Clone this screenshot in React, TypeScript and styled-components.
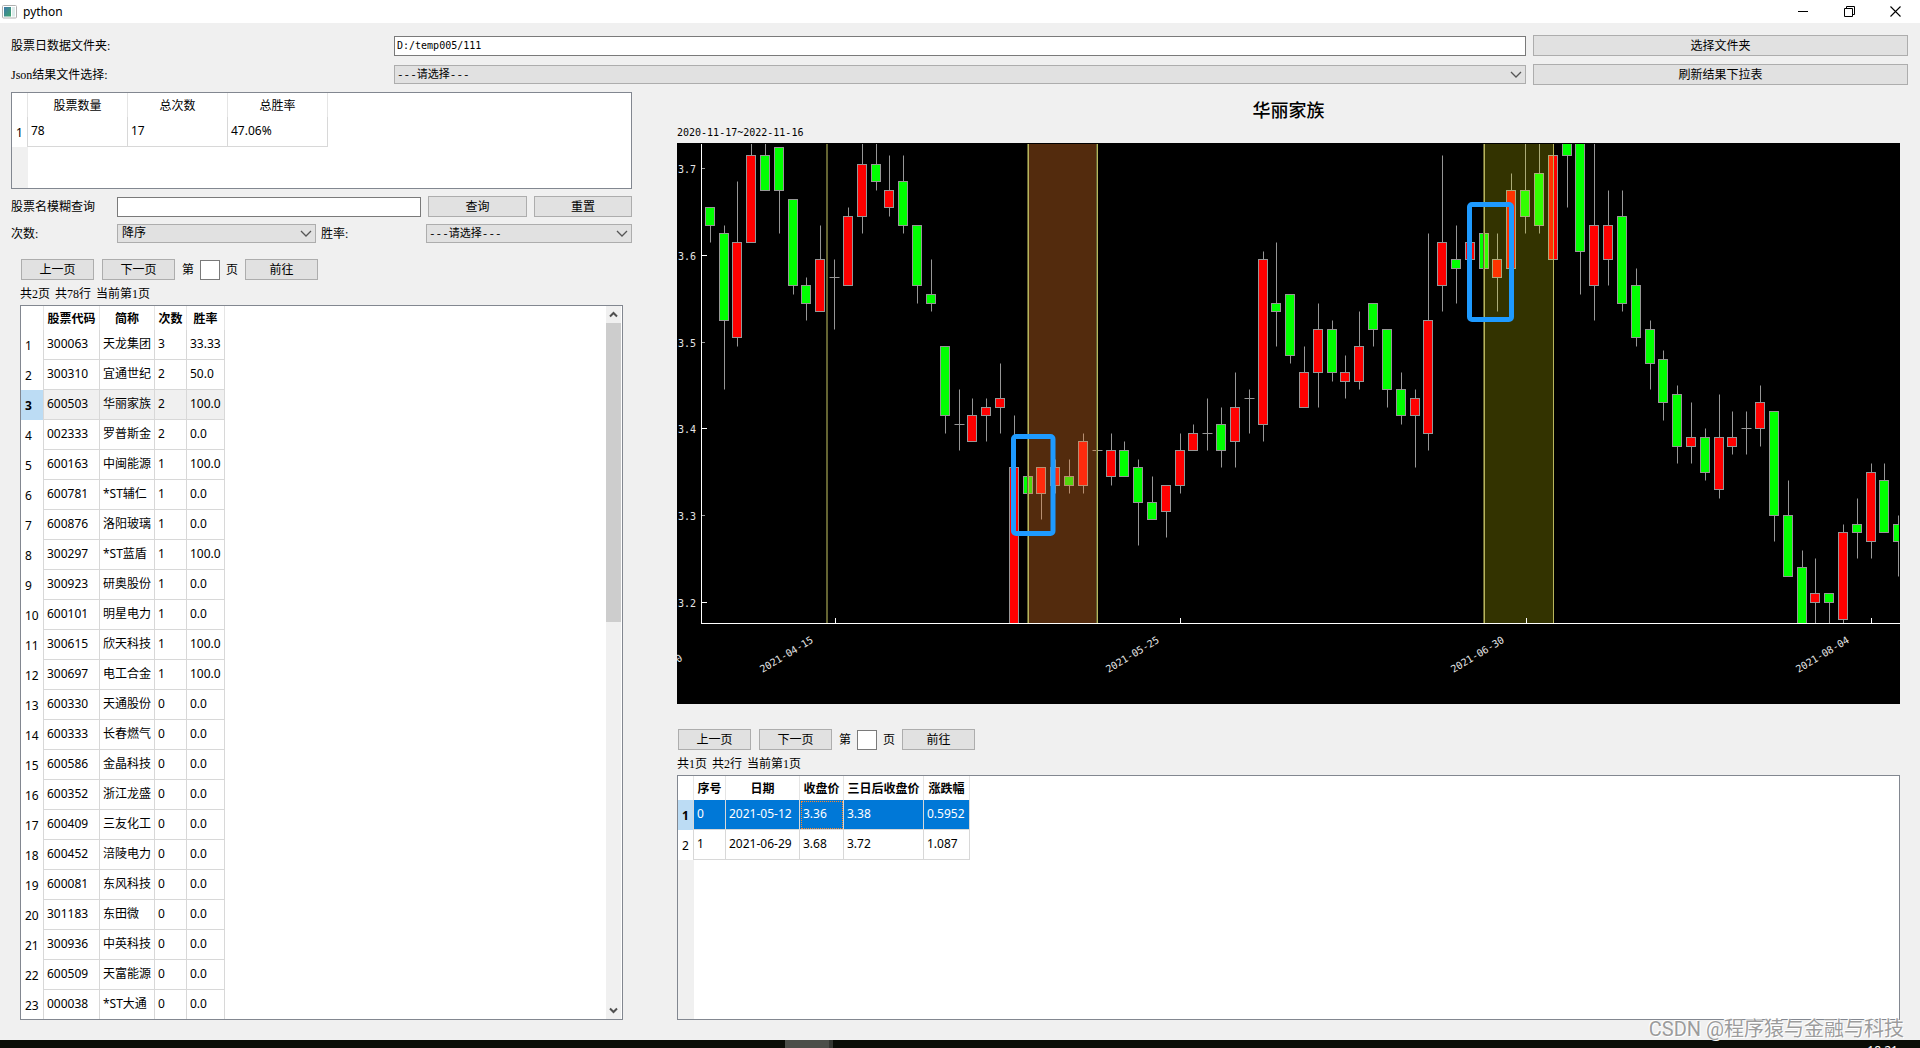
import React from 'react';
import styled, { createGlobalStyle, css } from 'styled-components';

const UI = `"Noto Sans", "Noto Sans CJK SC", sans-serif`;
const SONG = `"Liberation Serif", "Noto Sans CJK SC", sans-serif`;
const MONO = `"DejaVu Sans Mono", "Noto Sans CJK SC", monospace`;

const GlobalStyle = createGlobalStyle`
  *, *::before, *::after { box-sizing: border-box; }
  body { margin: 0; background: #f0f0f0; color: #000; font: 12px/16px ${SONG}; overflow: hidden; }
  button, input, select { font: inherit; color: inherit; margin: 0; }
`;

const Window = styled.div`
  height: 100vh;
  display: flex;
  flex-direction: column;
`;

const TitleBar = styled.header`
  height: 23px;
  flex: none;
  display: flex;
  align-items: center;
  background: #fff;
  padding: 0 2px;
  font-family: ${UI};
`;

const AppTitle = styled.h1`
  flex: 1;
  margin: 0 0 0 5px;
  font-size: 12px;
  line-height: 16px;
  font-weight: 400;
`;

const CaptionButton = styled.button`
  width: 46px;
  height: 20px;
  border: 0;
  padding: 0;
  background: none;
  display: grid;
  place-items: center;
`;

const Content = styled.main`
  flex: 1;
  min-height: 0;
  display: flex;
  flex-direction: column;
  gap: 7px;
  padding: 12px 12px 20px 11px;
`;

const FileForm = styled.form`
  display: grid;
  grid-template-columns: 376fr 1132fr 375fr;
  gap: 8px 7px;
  align-items: center;
`;

const Button = styled.button`
  height: 21px;
  width: ${(p: { $width?: string }) => p.$width ?? '100%'};
  padding: 2px 0 0;
  border: 1px solid #adadad;
  background: #e1e1e1;
  line-height: 17px;
`;

const TextInput = styled.input`
  height: 20px;
  width: ${(p: { $width?: string }) => p.$width ?? '100%'};
  padding: 0 2px;
  border: 1px solid #7a7a7a;
  background: #fff;
  font-family: ${MONO};
  font-size: 10px;
`;

const SelectBox = styled.span`
  position: relative;
  display: block;
  width: 100%;
  svg { position: absolute; right: 4px; top: 6px; pointer-events: none; }
`;

const Select = styled.select`
  display: block;
  appearance: none;
  width: 100%;
  height: 19px;
  padding: 0 20px 0 ${(p: { $small?: boolean }) => (p.$small ? '2px' : '4px')};
  border: 1px solid #adadad;
  border-radius: 0;
  background: #e1e1e1;
  font-family: "Liberation Mono", "Noto Sans CJK SC", monospace;
  font-size: ${(p: { $small?: boolean }) => (p.$small ? '11px' : '12px')};
  line-height: 16px;
`;

const Columns = styled.div`
  flex: 1;
  min-height: 0;
  display: grid;
  grid-template-columns: 621fr 1223fr;
  grid-template-rows: minmax(0, 1fr);
  column-gap: 45px;
  padding-right: 8px;
`;

const Column = styled.section`
  display: flex;
  flex-direction: column;
  min-width: 0;
  min-height: 0;
`;

const QueryForm = styled.form`
  display: flex;
  flex-direction: column;
  gap: 7px;
  margin-top: 7px;
`;

const QueryRow = styled.div`
  display: grid;
  grid-template-columns: 99px 304fr 99fr 98fr;
  column-gap: 7px;
  align-items: center;
`;

const SortRow = styled.div`
  display: grid;
  grid-template-columns: 101px 199fr 100px 206fr;
  column-gap: 5px;
  align-items: center;
`;

const ListBlock = styled.div`
  flex: 1;
  min-height: 0;
  display: flex;
  flex-direction: column;
  padding: ${(p: { $inset?: boolean }) => (p.$inset ? '0 9px' : '0')};
  margin-top: ${(p: { $inset?: boolean }) => (p.$inset ? '16px' : '25px')};
`;

const Pager = styled.div`
  display: flex;
  align-items: center;
  gap: 8px;
  padding-left: 1px;
`;

const PageJump = styled.label`
  display: flex;
  align-items: center;
  gap: 6px;
  margin: 0 -1px;
`;

const PageInfo = styled.p`
  display: flex;
  gap: 5px;
  margin: 6px 0 3px;
  line-height: 16px;
`;

const Panel = styled.div<{ $stub: string; $grow?: boolean }>`
  display: flex;
  overflow: hidden;
  min-height: 0;
  border: 1px solid #828790;
  background: linear-gradient(to right, #f0f0f0 ${p => p.$stub}, #fff ${p => p.$stub});
  ${p => (p.$grow ? css`flex: 1;` : css`flex: 0 0 97px;`)}
`;

const PanelBody = styled.div`
  flex: 1;
  min-width: 0;
  overflow: hidden;
`;

const HeaderStrip = styled.div`
  height: 24px;
  margin-bottom: -24px;
  background: #fff;
`;

const Table = styled.table`
  position: relative;
  table-layout: fixed;
  width: 0;
  border-spacing: 0;
  font-family: ${UI};
  font-size: 12px;
  line-height: 16px;
  white-space: nowrap;
`;

const Col = styled.col<{ $w: number }>`
  width: ${p => p.$w}px;
`;

const HeadCell = styled.th<{ $bold?: boolean }>`
  height: 24px;
  padding: 2px 0 0;
  border-right: 1px solid #e5e5e5;
  background: #fff;
  font-weight: ${p => (p.$bold ? 700 : 400)};
`;

type RowState = 'none' | 'hover' | 'selected';

const RowHead = styled.th<{ $state: RowState }>`
  height: 30px;
  padding: 2px 0 0 4px;
  border-right: 1px solid #d8d8d8;
  text-align: left;
  background: ${p => (p.$state === 'none' ? '#fff' : '#bcdcf4')};
  font-weight: ${p => (p.$state === 'none' ? 400 : 700)};
`;

const Cell = styled.td<{ $state: RowState; $focus?: boolean }>`
  height: 30px;
  padding: 0 0 2px 3px;
  border-right: 1px solid #d8d8d8;
  border-bottom: 1px solid #d8d8d8;
  background: ${p => ({ none: '#fff', hover: '#f0f0f0', selected: '#0078d7' })[p.$state]};
  color: ${p => (p.$state === 'selected' ? '#fff' : '#000')};
  ${p => p.$focus && css`outline: 1px dotted #ff8728; outline-offset: -2px;`}
`;

const ScrollBar = styled.div`
  width: 15px;
  margin-right: 1px;
  display: flex;
  flex-direction: column;
  background: #f0f0f0;
`;

const ScrollButton = styled.button`
  height: 17px;
  border: 0;
  padding: 0;
  background: none;
  display: grid;
  place-items: center;
`;

const ScrollTrack = styled.div`
  flex: 1;
`;

const ScrollThumb = styled.div`
  height: 44%;
  background: #cdcdcd;
`;

const ChartTitle = styled.h2`
  margin: 5px 0 4px;
  text-align: center;
  font: 500 18px/24px "Noto Sans CJK SC", sans-serif;
`;

const ChartRange = styled.p`
  margin: 0 0 2px;
  font: 10px/16px ${MONO};
`;

const Chart = styled.svg`
  display: block;
  flex: none;
  width: 100%;
  background: #000;
  text { fill: #e4e4e4; font: 10px ${MONO}; }
`;

const Taskbar = styled.footer`
  position: relative;
  flex: none;
  height: 8px;
  display: flex;
  justify-content: flex-end;
  overflow: hidden;
  background: #0a0d07;
  padding: 3px 22px 0 0;
  color: #fff;
  font: 12px/16px ${UI};
`;

const ActiveTask = styled.span`
  position: absolute;
  left: 785px;
  top: 0;
  width: 48px;
  height: 8px;
  background: #4b4e49;
  border-right: 4px solid #343732;
`;

const Watermark = styled.div`
  position: absolute;
  right: 16px;
  bottom: 4px;
  font: 20px/30px Roboto, "Noto Sans CJK SC", sans-serif;
  color: #9c9c9c;
  text-shadow: 1px 1px 0 #fff, -1px -1px 0 #fff;
`;

const Chevron = () => (
  <svg width="12" height="8" viewBox="0 0 12 8">
    <path d="M1 1 L6 6 L11 1" fill="none" stroke="#555" strokeWidth="1.3" />
  </svg>
);

const ScrollArrow = ({ down }: { down?: boolean }) => (
  <svg width="9" height="7" viewBox="0 0 9 7">
    <path d={down ? 'M1 1.5 L4.5 5 L8 1.5' : 'M1 5.5 L4.5 2 L8 5.5'} fill="none" stroke="#505050" strokeWidth="2" />
  </svg>
);

interface GridProps {
  label: string;
  stub: number;
  widths: number[];
  heads: string[];
  rows: string[][];
  bold?: boolean;
  active?: number;
  activeState?: RowState;
  focusCol?: number;
}

const DataGrid = ({ label, stub, widths, heads, rows, bold, active = -1, activeState = 'none', focusCol = -1 }: GridProps) => (
  <PanelBody>
    <HeaderStrip />
    <Table aria-label={label}>
      <colgroup>
        <Col $w={stub} />
        {widths.map((w, i) => <Col key={i} $w={w} />)}
      </colgroup>
      <thead>
        <tr>
          <HeadCell as="td" />
          {heads.map(h => <HeadCell key={h} scope="col" $bold={bold}>{h}</HeadCell>)}
        </tr>
      </thead>
      <tbody>
        {rows.map((row, r) => {
          const state: RowState = r === active ? activeState : 'none';
          return (
            <tr key={r}>
              <RowHead scope="row" $state={state}>{r + 1}</RowHead>
              {row.map((v, c) => (
                <Cell key={c} $state={state} $focus={state === 'selected' && c === focusCol}>{v}</Cell>
              ))}
            </tr>
          );
        })}
      </tbody>
    </Table>
  </PanelBody>
);

const stocks = `300063 天龙集团 3 33.33
300310 宜通世纪 2 50.0
600503 华丽家族 2 100.0
002333 罗普斯金 2 0.0
600163 中闽能源 1 100.0
600781 *ST辅仁 1 0.0
600876 洛阳玻璃 1 0.0
300297 *ST蓝盾 1 100.0
300923 研奥股份 1 0.0
600101 明星电力 1 0.0
300615 欣天科技 1 100.0
300697 电工合金 1 100.0
600330 天通股份 0 0.0
600333 长春燃气 0 0.0
600586 金晶科技 0 0.0
600352 浙江龙盛 0 0.0
600409 三友化工 0 0.0
600452 涪陵电力 0 0.0
600081 东风科技 0 0.0
301183 东田微 0 0.0
300936 中英科技 0 0.0
600509 天富能源 0 0.0
000038 *ST大通 0 0.0`.split('\n').map(l => l.split(' '));

// One candle per entry: kind, then high, body top, body bottom, low in 0.01 steps below 3.695.
const candles: [string, number, number, number, number][] = [
  ['g', 4, 4, 6, 8], ['g', 6, 7, 17, 25], ['r', 1, 8, 19, 20], ['r', -9, -2, 8, 8], ['g', -9, -2, 2, 2],
  ['g', -3, -3, 2, 7], ['g', 3, 3, 13, 14], ['g', 12, 13, 15, 17], ['r', 6, 10, 16, 16], ['d', 10, 12, 12, 18],
  ['r', 4, 5, 13, 13], ['r', -9, -1, 5, 7], ['g', -9, -1, 1, 2], ['r', -2, 2, 4, 5], ['g', -2, 1, 6, 7],
  ['g', 6, 6, 13, 15], ['g', 10, 14, 15, 16], ['g', 20, 20, 28, 30], ['d', 25, 29, 29, 32], ['r', 26, 28, 31, 31],
  ['r', 26, 27, 28, 31], ['r', 22, 26, 27, 30], ['r', 28, 34, 60, 60], ['g', 34, 35, 37, 37], ['r', 34, 34, 37, 40],
  ['r', 33, 34, 36, 37], ['g', 33, 35, 36, 37], ['r', 30, 31, 36, 37], ['d', 32, 32, 32, 32], ['r', 30, 32, 35, 36],
  ['g', 31, 32, 35, 35], ['g', 33, 34, 38, 43], ['g', 35, 38, 40, 40], ['r', 36, 36, 39, 42], ['r', 30, 32, 36, 37],
  ['r', 29, 30, 32, 32], ['d', 26, 30, 30, 32], ['g', 27, 29, 32, 34], ['r', 23, 27, 31, 34], ['d', 25, 26, 26, 30],
  ['r', 9, 10, 29, 31], ['g', 8, 15, 16, 20], ['g', 14, 14, 21, 22], ['r', 20, 23, 27, 27], ['r', 15, 18, 23, 27],
  ['g', 17, 18, 23, 24], ['r', 21, 23, 24, 26], ['r', 16, 20, 24, 25], ['g', 15, 15, 18, 20], ['g', 18, 18, 25, 27],
  ['g', 23, 25, 28, 29], ['r', 25, 26, 28, 34], ['r', 7, 17, 30, 32], ['r', -2, 8, 13, 16], ['g', 6, 10, 11, 15],
  ['r', 7, 8, 10, 10], ['g', 6, 7, 11, 16], ['r', 7, 10, 12, 16], ['r', 0, 2, 11, 11], ['g', -9, 2, 5, 7],
  ['g', -9, 0, 6, 7], ['r', -9, -2, 10, 14], ['g', -9, -9, -2, 4], ['g', -9, -9, 9, 14], ['r', -9, 6, 13, 17],
  ['r', 2, 6, 10, 13], ['g', 2, 5, 15, 16], ['g', 11, 13, 19, 20], ['g', 17, 18, 22, 25], ['g', 20.5, 21.5, 26.5, 28.5],
  ['g', 24.5, 25.5, 31.5, 33.5], ['r', 26.5, 30.5, 31.5, 33.5], ['g', 29.5, 30.5, 34.5, 35.5], ['r', 25.5, 30.5, 36.5, 37.5],
  ['r', 27.5, 30.5, 31.5, 32.5], ['d', 27.5, 29.5, 29.5, 32.5], ['r', 24.5, 26.5, 29.5, 31.5], ['g', 27.5, 27.5, 39.5, 42.5],
  ['g', 35.5, 39.5, 46.5, 46.5], ['g', 43.5, 45.5, 60, 60], ['r', 44.5, 48.5, 49.5, 60], ['g', 48.5, 48.5, 49.5, 60],
  ['r', 40.5, 41.5, 51.5, 60], ['g', 37.5, 40.5, 41.5, 44.5], ['r', 33.5, 34.5, 42.5, 44.5], ['g', 33.5, 35.5, 41.5, 41.5],
  ['g', 39.5, 40.5, 42.5, 46.5],
];

const py = (v: number) => Math.floor(30.2 + (v * 26) / 3) + 0.5;
const px = (i: number) => Math.floor(33.25 + i * 13.82) + 0.5;

const CandleChart = () => (
  <Chart viewBox="0 0 1223 561" role="img" aria-label="华丽家族 K线图">
    <defs>
      <clipPath id="plot"><rect x="25" y="1" width="1197" height="479" /></clipPath>
    </defs>
    <g clipPath="url(#plot)">
      {candles.map(([kind, hi, top, bot, lo], i) => (
        <g key={i} stroke="#969696">
          <line x1={px(i)} x2={px(i)} y1={py(hi)} y2={py(lo)} />
          {kind === 'd'
            ? <line x1={px(i) - 5} x2={px(i) + 5} y1={py(top)} y2={py(top)} />
            : <rect x={px(i) - 5} y={py(top)} width="9" height={py(bot) - py(top)} fill={kind === 'g' ? '#0f0' : '#f00'} />}
        </g>
      ))}
      <rect x="149" y="1" width="2" height="479" fill="#646432" />
      <rect x="351" y="1" width="69" height="479" fill="rgba(251,130,39,.33)" />
      <rect x="808" y="1" width="69" height="479" fill="rgba(255,255,0,.2)" />
      <g fill="#646432">
        <rect x="350" y="1" width="1" height="479" />
        <rect x="419" y="1" width="1" height="479" />
        <rect x="806" y="1" width="1" height="479" />
      </g>
      <g fill="#b8b45c">
        <rect x="351" y="1" width="1" height="479" />
        <rect x="420" y="1" width="1" height="479" />
        <rect x="807" y="1" width="1" height="479" />
        <rect x="876" y="1" width="1" height="479" />
      </g>
    </g>
    <g stroke="#fff">
      <line x1="24.5" x2="24.5" y1="1" y2="481" />
      <line x1="24" x2="1223" y1="480.5" y2="480.5" />
      {[158, 503, 849, 1194].map(x => <line key={x} x1={x + 0.5} x2={x + 0.5} y1="475" y2="481" />)}
    </g>
    {['3.7', '3.6', '3.5', '3.4', '3.3', '3.2'].map((t, i) => {
      const y = Math.round(25 + i * 86.8) + 0.5;
      const major = i % 2 === 1;
      return (
        <g key={t}>
          <line x1="25" x2={major ? 30 : 28} y1={y} y2={y} stroke={major ? '#fff' : '#969696'} />
          <text x="1" y={y + 4}>{t}</text>
        </g>
      );
    })}
    {([[137, '2021-04-15'], [483, '2021-05-25'], [828, '2021-06-30'], [1173, '2021-08-04']] as [number, string][]).map(([x, t]) => (
      <text key={t} x={x} y="499" textAnchor="end" transform={`rotate(-31 ${x} 499)`}>{t}</text>
    ))}
    <text x="1" y="520" transform="rotate(-31 1 520)">0</text>
    <g fill="none" stroke="#1e9aff" strokeWidth="5">
      <rect x="336.5" y="293.5" width="39.5" height="97" rx="2.5" />
      <rect x="792.5" y="61.5" width="42" height="115" rx="2.5" />
    </g>
  </Chart>
);

const PageControls = ({ id, info }: { id: string; info: string[] }) => (
  <>
    <Pager>
      <Button type="button" $width="73px">上一页</Button>
      <Button type="button" $width="73px">下一页</Button>
      <PageJump htmlFor={id}>第<TextInput id={id} $width="20px" />页</PageJump>
      <Button type="button" $width="73px">前往</Button>
    </Pager>
    <PageInfo>{info.map(part => <span key={part}>{part}</span>)}</PageInfo>
  </>
);

export default function App() {
  return (
    <Window>
      <GlobalStyle />
      <TitleBar>
        <svg width="16" height="14" viewBox="0 0 16 14">
          <defs>
            <linearGradient id="appIcon" x1="0" y1="0" x2="1" y2="1">
              <stop offset="0" stopColor="#3f79ac" />
              <stop offset="1" stopColor="#3da56a" />
            </linearGradient>
          </defs>
          <rect x=".5" y=".5" width="14" height="12.5" rx="1" fill="#fff" stroke="#b0b0b0" />
          <rect x="2" y="2" width="7" height="9.5" fill="url(#appIcon)" />
          <rect x="10" y="2" width="3" height="9.5" fill="#dcebea" />
        </svg>
        <AppTitle>python</AppTitle>
        <CaptionButton aria-label="最小化">
          <svg width="11" height="11" viewBox="0 0 11 11"><path d="M0 5.5 H10" stroke="#000" /></svg>
        </CaptionButton>
        <CaptionButton aria-label="还原">
          <svg width="11" height="11" viewBox="0 0 11 11" fill="none" stroke="#000">
            <path d="M.5 2.5 H8.5 V10.5 H.5 Z M2.5 2.5 V.5 H10.5 V8.5 H8.5" />
          </svg>
        </CaptionButton>
        <CaptionButton aria-label="关闭">
          <svg width="11" height="11" viewBox="0 0 11 11"><path d="M.5 .5 L10.5 10.5 M10.5 .5 L.5 10.5" stroke="#000" strokeWidth="1.1" /></svg>
        </CaptionButton>
      </TitleBar>

      <Content>
        <FileForm>
          <label htmlFor="folder">股票日数据文件夹:</label>
          <TextInput id="folder" defaultValue="D:/temp005/111" />
          <Button type="button">选择文件夹</Button>
          <label htmlFor="json">Json结果文件选择:</label>
          <SelectBox>
            <Select id="json" $small><option>---请选择---</option></Select>
            <Chevron />
          </SelectBox>
          <Button type="button">刷新结果下拉表</Button>
        </FileForm>

        <Columns>
          <Column>
            <Panel $stub="16px">
              <DataGrid label="汇总" stub={16} widths={[100, 100, 100]} heads={['股票数量', '总次数', '总胜率']} rows={[['78', '17', '47.06%']]} />
            </Panel>
            <QueryForm>
              <QueryRow>
                <label htmlFor="name">股票名模糊查询</label>
                <TextInput id="name" />
                <Button type="button">查询</Button>
                <Button type="button">重置</Button>
              </QueryRow>
              <SortRow>
                <label htmlFor="count">次数:</label>
                <SelectBox>
                  <Select id="count"><option>降序</option></Select>
                  <Chevron />
                </SelectBox>
                <label htmlFor="rate">胜率:</label>
                <SelectBox>
                  <Select id="rate" $small><option>---请选择---</option></Select>
                  <Chevron />
                </SelectBox>
              </SortRow>
            </QueryForm>
            <ListBlock $inset>
              <PageControls id="stockPage" info={['共2页', '共78行', '当前第1页']} />
              <Panel $stub="22px" $grow>
                <DataGrid
                  label="股票列表" stub={23} widths={[56, 55, 32, 38]} heads={['股票代码', '简称', '次数', '胜率']}
                  rows={stocks} bold active={2} activeState="hover"
                />
                <ScrollBar>
                  <ScrollButton aria-label="向上"><ScrollArrow /></ScrollButton>
                  <ScrollTrack><ScrollThumb /></ScrollTrack>
                  <ScrollButton aria-label="向下"><ScrollArrow down /></ScrollButton>
                </ScrollBar>
              </Panel>
            </ListBlock>
          </Column>

          <Column>
            <ChartTitle>华丽家族</ChartTitle>
            <ChartRange>2020-11-17~2022-11-16</ChartRange>
            <CandleChart />
            <ListBlock>
              <PageControls id="signalPage" info={['共1页', '共2行', '当前第1页']} />
              <Panel $stub="16px" $grow>
                <DataGrid
                  label="信号列表" stub={16} widths={[32, 74, 44, 80, 46]} heads={['序号', '日期', '收盘价', '三日后收盘价', '涨跌幅']}
                  rows={[['0', '2021-05-12', '3.36', '3.38', '0.5952'], ['1', '2021-06-29', '3.68', '3.72', '1.087']]}
                  bold active={0} activeState="selected" focusCol={2}
                />
              </Panel>
            </ListBlock>
          </Column>
        </Columns>
      </Content>

      <Taskbar><ActiveTask />18:21</Taskbar>
      <Watermark>CSDN @程序猿与金融与科技</Watermark>
    </Window>
  );
}
